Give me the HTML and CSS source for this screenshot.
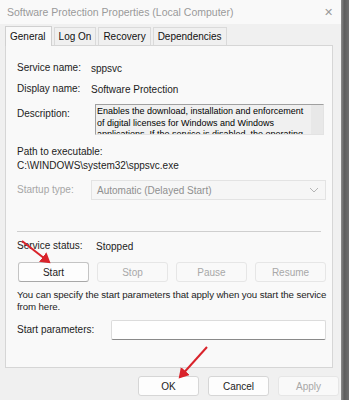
FILE: index.html
```html
<!DOCTYPE html>
<html lang="en">
<head>
    <meta charset="UTF-8">
    <meta name="viewport" content="width=device-width, initial-scale=1.0">
    <link rel="stylesheet" href="styles.css">
</head>
<body>
    <div class="screen">
        <div class="window">
            <div class="title-bar">
                <span class="title">Software Protection Properties (Local Computer)</span>
                <span class="close">&#x2715;</span>
            </div>
            <div class="tabs">
                <div class="tab active">General</div>
                <div class="tab">Log On</div>
                <div class="tab">Recovery</div>
                <div class="tab">Dependencies</div>
            </div>
            <div class="panel">
                <div class="row first">
                    <span class="label">Service name:</span>
                    <span>sppsvc</span>
                </div>
                <div class="row second">
                    <span class="label">Display name:</span>
                    <span>Software Protection</span>
                </div>
                <div class="row desc-row">
                    <span class="label desc-label">Description:</span>
                    <div class="desc-box">
                        <div class="desc-text">Enables the download, installation and enforcement of digital licenses for Windows and Windows applications. If the service is disabled, the operating</div>
                        <div class="scroll"></div>
                    </div>
                </div>
                <div class="path-label">Path to executable:</div>
                <div class="path-value">C:\WINDOWS\system32\sppsvc.exe</div>
                <div class="row startup-row">
                    <span class="label disabled">Startup type:</span>
                    <div class="combo">
                        <span>Automatic (Delayed Start)</span>
                        <svg class="chevron" width="10" height="6" viewBox="0 0 10 6">
                            <path d="M1 1 L5 5 L9 1" fill="none" stroke="#b5b5b5" stroke-width="1"/>
                        </svg>
                    </div>
                </div>
                <div class="separator"></div>
                <div class="row status-row">
                    <span class="label">Service status:</span>
                    <span class="status">Stopped</span>
                </div>
                <div class="service-buttons">
                    <button type="button" class="btn default">Start</button>
                    <button type="button" class="btn" disabled>Stop</button>
                    <button type="button" class="btn" disabled>Pause</button>
                    <button type="button" class="btn" disabled>Resume</button>
                </div>
                <p class="hint">You can specify the start parameters that apply when you start the service from here.</p>
                <div class="row params-row">
                    <span class="label params-label">Start parameters:</span>
                    <input type="text" class="params-input">
                </div>
            </div>
            <div class="dialog-buttons">
                <button type="button" class="btn wide">OK</button>
                <button type="button" class="btn wide">Cancel</button>
                <button type="button" class="btn wide" disabled>Apply</button>
            </div>
        </div>
        <div class="edge"></div>
    </div>
    <!-- red annotation arrows drawn over the dialog -->
    <svg class="arrows" width="349" height="400" viewBox="0 0 349 400">
        <defs>
            <marker id="head" markerWidth="6" markerHeight="6" refX="4" refY="3" orient="auto" markerUnits="strokeWidth">
                <path d="M0 0 L5 3 L0 6 Z" fill="#d9232b"/>
            </marker>
        </defs>
        <line x1="22" y1="241" x2="49" y2="262" stroke="#d9232b" stroke-width="2" marker-end="url(#head)"/>
        <line x1="207" y1="347" x2="180" y2="377" stroke="#d9232b" stroke-width="2" marker-end="url(#head)"/>
    </svg>
</body>
</html>
```

FILE: styles.css
```css
body {
    margin: 0;
    font-family: "Liberation Sans", Arial, sans-serif;
    font-size: 10px;
    color: #1c1c1c;
    background: #f0f0f0;
}
.screen {
    display: flex;
    width: 349px;
    height: 400px;
    overflow: hidden;
}
.window {
    width: 341px;
    flex-shrink: 0;
    background: #f0f0f0;
    display: flex;
    flex-direction: column;
}
.edge {
    flex: 1;
    background: linear-gradient(to right, #8c8c8c, #5e5e5e 40%, #6f6f6f);
}
.title-bar {
    height: 24px;
    background: #f9f9f9;
    display: flex;
    align-items: center;
    justify-content: space-between;
    padding: 0 8px 0 7px;
}
.title {
    font-size: 10.5px;
    color: #9a9a9a;
}
.close {
    font-size: 11px;
    color: #9a9a9a;
}
.tabs {
    display: flex;
    height: 19px;
    margin-top: 2px;
    padding-left: 5px;
    align-items: flex-end;
}
.tab {
    height: 18px;
    line-height: 18px;
    padding: 0 4px;
    margin-right: 2px;
    border: 1px solid #dadada;
    border-bottom: 0;
    box-sizing: border-box;
    color: #111;
}
.tab.active {
    height: 20px;
    line-height: 19px;
    background: #f9f9f9;
    border-color: #d0d0d0;
    position: relative;
    top: 1px;
    padding: 0 5px 0 4px;
}
.panel {
    margin-left: 5px;
    width: 328px;
    height: 323px;
    box-sizing: border-box;
    background: #f9f9f9;
    border: 1px solid #d6d6d6;
    padding: 0 0 0 11px;
}
.row {
    display: flex;
    align-items: center;
}
.label {
    width: 74px;
    flex-shrink: 0;
    line-height: 14px;
}
.row.first {
    margin-top: 15px;
}
.row.second {
    margin-top: 7px;
}
.desc-row {
    margin-top: 8px;
    align-items: flex-start;
}
.desc-label {
    padding-top: 3px;
    width: 78px;
}
.desc-box {
    width: 229px;
    height: 31px;
    box-sizing: border-box;
    border: 1px solid #a0a0a0;
    border-right-color: #e3e3e3;
    border-bottom-color: #e3e3e3;
    background: #f0f0f0;
    display: flex;
    overflow: hidden;
}
.desc-text {
    flex: 1;
    padding: 1px 0 0 1px;
    line-height: 11.7px;
    font-size: 9px;
    color: #000;
}
.scroll {
    width: 12px;
    background: #e8e8e8;
}
.path-label {
    margin-top: 10px;
    line-height: 14px;
}
.path-value {
    line-height: 14px;
}
.startup-row {
    margin-top: 7px;
}
.disabled {
    color: #a6a6a6;
}
.combo {
    width: 235px;
    height: 20px;
    box-sizing: border-box;
    border: 1px solid #e3e3e3;
    background: #f6f6f6;
    display: flex;
    align-items: center;
    justify-content: space-between;
    padding: 0 6px 0 5px;
    color: #8f8f8f;
}
.separator {
    margin-top: 31px;
    width: 304px;
    height: 1px;
    background: #cfcfcf;
}
.status-row {
    margin-top: 7px;
}
.status-row .label {
    width: 79px;
}
.service-buttons {
    display: flex;
    gap: 8px;
    margin-top: 9px;
    padding-left: 1px;
}
.btn {
    width: 71px;
    height: 20px;
    padding: 0;
    font-family: "Liberation Sans", Arial, sans-serif;
    font-size: 10px;
    color: #1c1c1c;
    background: #fdfdfd;
    border: 1px solid #d6d6d6;
    border-radius: 3px;
}
.btn.default {
    border-color: #c4c4c4;
    border-bottom-color: #a8a8a8;
}
.btn:disabled {
    color: #a8a8a8;
    background: #f9f9f9;
    border-color: #e6e6e6;
}
.hint {
    margin: 7px 0 0;
    line-height: 12px;
    width: 314px;
    font-size: 9.7px;
    letter-spacing: -0.1px;
}
.params-row {
    margin-top: 7px;
}
.params-label {
    width: 94px;
}
.params-input {
    width: 215px;
    height: 20px;
    box-sizing: border-box;
    border: 1px solid #dcdcdc;
    border-bottom-color: #8a8a8a;
    border-radius: 2px;
    background: #fff;
    margin: 0;
}
.dialog-buttons {
    display: flex;
    gap: 9px;
    justify-content: flex-end;
    padding: 8px 2px 0 0;
}
.btn.wide {
    width: 61px;
}
.arrows {
    position: absolute;
    left: 0;
    top: 0;
    pointer-events: none;
}
```
